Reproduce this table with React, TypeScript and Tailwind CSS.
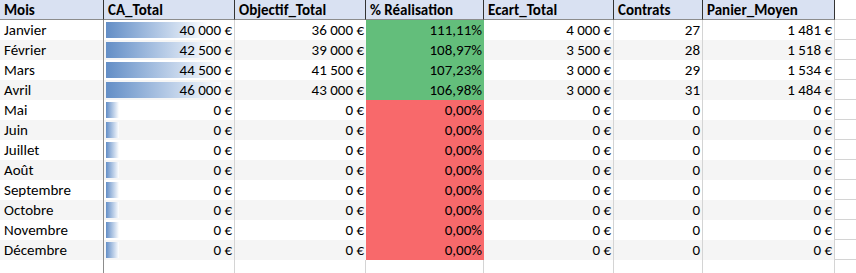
import React from "react";

type Row = {
  mois: string;
  ca: number;
  objectif: number;
  pct: string;
  ecart: number;
  contrats: number;
  panier: number;
};

const rows: Row[] = [
  { mois: "Janvier", ca: 40000, objectif: 36000, pct: "111,11%", ecart: 4000, contrats: 27, panier: 1481 },
  { mois: "Février", ca: 42500, objectif: 39000, pct: "108,97%", ecart: 3500, contrats: 28, panier: 1518 },
  { mois: "Mars", ca: 44500, objectif: 41500, pct: "107,23%", ecart: 3000, contrats: 29, panier: 1534 },
  { mois: "Avril", ca: 46000, objectif: 43000, pct: "106,98%", ecart: 3000, contrats: 31, panier: 1484 },
  { mois: "Mai", ca: 0, objectif: 0, pct: "0,00%", ecart: 0, contrats: 0, panier: 0 },
  { mois: "Juin", ca: 0, objectif: 0, pct: "0,00%", ecart: 0, contrats: 0, panier: 0 },
  { mois: "Juillet", ca: 0, objectif: 0, pct: "0,00%", ecart: 0, contrats: 0, panier: 0 },
  { mois: "Août", ca: 0, objectif: 0, pct: "0,00%", ecart: 0, contrats: 0, panier: 0 },
  { mois: "Septembre", ca: 0, objectif: 0, pct: "0,00%", ecart: 0, contrats: 0, panier: 0 },
  { mois: "Octobre", ca: 0, objectif: 0, pct: "0,00%", ecart: 0, contrats: 0, panier: 0 },
  { mois: "Novembre", ca: 0, objectif: 0, pct: "0,00%", ecart: 0, contrats: 0, panier: 0 },
  { mois: "Décembre", ca: 0, objectif: 0, pct: "0,00%", ecart: 0, contrats: 0, panier: 0 },
];

// "40 000 €" with non-breaking spaces
const euro = (n: number) =>
  n.toLocaleString("fr-FR").replace(/[\u202f\u00a0]/g, "\u00a0") + "\u00a0€";

const headers = ["Mois", "CA_Total", "Objectif_Total", "% Réalisation", "Ecart_Total", "Contrats", "Panier_Moyen"];

export default function App() {
  const maxCa = Math.max(...rows.map((r) => r.ca));

  return (
    <div className="w-[856px] h-[273px] overflow-hidden bg-white text-black font-['Calibri','Lato',sans-serif] text-[15px] leading-[20px]">
      <div className="grid grid-cols-[104px_131px_131px_118px_130px_89px_132px_21px]">
        {/* Header */}
        {headers.map((h) => (
          <div
            key={h}
            className="h-[20px] pl-1 font-bold bg-[#d9e1f2] border-b border-r border-b-[#8c8c8c] border-r-[#333] whitespace-nowrap"
          >
            {h}
          </div>
        ))}
        <div className="h-[20px] border-b border-[#d4d4d4]" />

        {rows.map((r, idx) => {
          const bg = idx % 2 === 0 ? "bg-white" : "bg-[#f5f5f5]";
          const green = r.ca > 0;
          const barW = Math.round(13 + (102 * r.ca) / maxCa);
          return (
            <React.Fragment key={r.mois}>
              <div className={`h-[20px] pl-1 ${bg} border-r border-[#8c8c8c]`}>{r.mois}</div>
              <div className={`relative h-[20px] pr-[2px] text-right ${bg} border-r border-[#d4d4d4]`}>
                <div
                  className="absolute left-[2px] top-[2px] h-[16px] bg-gradient-to-r from-[#638ec6] to-white"
                  style={{ width: barW }}
                />
                <span className="relative">{euro(r.ca)}</span>
              </div>
              <div className={`h-[20px] pr-[2px] text-right ${bg}`}>{euro(r.objectif)}</div>
              <div className={`h-[20px] pr-[2px] text-right ${green ? "bg-[#63be7b]" : "bg-[#f8696b]"}`}>{r.pct}</div>
              <div className={`h-[20px] pr-[2px] text-right ${bg} border-r border-[#d4d4d4]`}>{euro(r.ecart)}</div>
              <div className={`h-[20px] pr-[2px] text-right ${bg} border-r border-[#d4d4d4]`}>{r.contrats}</div>
              <div className={`h-[20px] pr-[2px] text-right ${bg} border-r border-[#d4d4d4]`}>{euro(r.panier)}</div>
              <div className="h-[20px] border-b border-[#d4d4d4]" />
            </React.Fragment>
          );
        })}

        {/* Empty trailing row */}
        <div className="h-[20px] border-r border-[#8c8c8c]" />
        <div className="h-[20px] border-r border-[#d4d4d4]" />
        <div className="h-[20px] border-r border-[#d4d4d4]" />
        <div className="h-[20px] border-r border-[#d4d4d4]" />
        <div className="h-[20px] border-r border-[#d4d4d4]" />
        <div className="h-[20px] border-r border-[#d4d4d4]" />
        <div className="h-[20px] border-r border-[#d4d4d4]" />
        <div className="h-[20px]" />
      </div>
    </div>
  );
}
